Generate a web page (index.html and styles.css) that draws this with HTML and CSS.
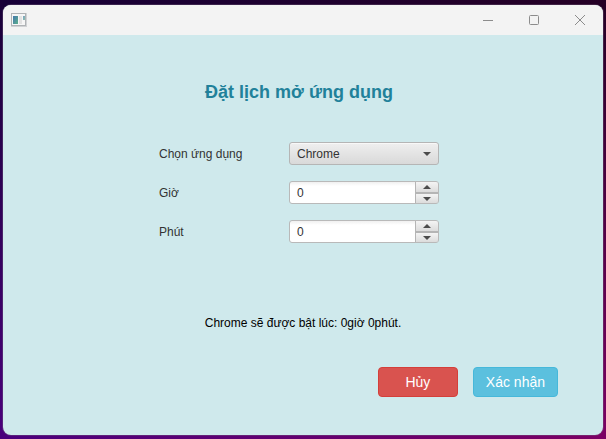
FILE: index.html
```html
<!DOCTYPE html>
<html lang="vi">
<head>
<meta charset="utf-8">
<meta name="viewport" content="width=device-width, initial-scale=1">
<title>Đặt lịch mở ứng dụng</title>
<link rel="stylesheet" href="styles.css">
</head>
<body>
<div class="window">
  <header class="titlebar">
    <svg class="app-icon" width="16" height="14" viewBox="0 0 16 14" aria-hidden="true">
      <defs>
        <linearGradient id="pane" x1="0" y1="0" x2="1" y2="1">
          <stop offset="0" stop-color="#4478ac"/>
          <stop offset="1" stop-color="#5cae8c"/>
        </linearGradient>
      </defs>
      <rect x="0.5" y="0.5" width="14" height="12" fill="#f6f6f6" stroke="#b0b3b6"/>
      <path d="M0 13.5H16M15.5 0V13" stroke="#d0d2d4"/>
      <rect x="2" y="3" width="5" height="8" fill="url(#pane)"/>
      <rect x="8" y="3" width="3" height="8" fill="#e2e2e2"/>
      <rect x="12" y="3" width="2" height="4" fill="url(#pane)" opacity="0.7"/>
    </svg>
    <div class="window-controls">
      <button class="window-button" type="button" aria-label="Minimize">
        <svg width="12" height="12" viewBox="0 0 12 12"><path d="M1 6.5H11"/></svg>
      </button>
      <button class="window-button" type="button" aria-label="Maximize">
        <svg width="12" height="12" viewBox="0 0 12 12"><rect x="1.5" y="1.5" width="9" height="9" rx="1"/></svg>
      </button>
      <button class="window-button" type="button" aria-label="Close">
        <svg width="12" height="12" viewBox="0 0 12 12"><path d="M1 1L11 11M11 1L1 11"/></svg>
      </button>
    </div>
  </header>
  <main>
    <form class="schedule">
      <div class="setup">
        <h1>Đặt lịch mở ứng dụng</h1>
        <div class="fields">
          <label for="app">Chọn ứng dụng</label>
          <div class="select-box">
            <select id="app"><option>Chrome</option></select>
            <svg class="arrow" width="8" height="4" viewBox="0 0 8 4" aria-hidden="true"><path d="M0 0H8L4 4Z"/></svg>
          </div>
          <label for="hour">Giờ</label>
          <div class="spinner">
            <input id="hour" type="text" inputmode="numeric" value="0">
            <div class="steps">
              <button type="button" aria-label="Tăng giờ"><svg width="8" height="4" viewBox="0 0 8 4"><path d="M0 4H8L4 0Z"/></svg></button>
              <button type="button" aria-label="Giảm giờ"><svg width="8" height="4" viewBox="0 0 8 4"><path d="M0 0H8L4 4Z"/></svg></button>
            </div>
          </div>
          <label for="minute">Phút</label>
          <div class="spinner">
            <input id="minute" type="text" inputmode="numeric" value="0">
            <div class="steps">
              <button type="button" aria-label="Tăng phút"><svg width="8" height="4" viewBox="0 0 8 4"><path d="M0 4H8L4 0Z"/></svg></button>
              <button type="button" aria-label="Giảm phút"><svg width="8" height="4" viewBox="0 0 8 4"><path d="M0 0H8L4 4Z"/></svg></button>
            </div>
          </div>
        </div>
      </div>
      <p class="summary">Chrome sẽ được bật lúc: 0giờ 0phút.</p>
      <div class="actions">
        <button class="action danger" type="button">Hủy</button>
        <button class="action info" type="submit">Xác nhận</button>
      </div>
    </form>
  </main>
</div>
</body>
</html>
```

FILE: styles.css
```css
* {
  box-sizing: border-box;
}

body {
  margin: 0;
  min-height: 100vh;
  display: flex;
  padding: 5px 3px 4px;
  background:
    linear-gradient(to bottom, #190038, #4a007c) left / 3px 100% no-repeat,
    linear-gradient(to bottom, #250025, #7c0064) right / 3px 100% no-repeat,
    linear-gradient(to right, #4a007c, #7c0064) bottom / 100% 12px no-repeat,
    linear-gradient(to right, #170038, #250025);
  font: 12px/16px "Liberation Sans", Arial, sans-serif;
  color: #333;
}

button,
input,
select {
  font: inherit;
  color: inherit;
  margin: 0;
}

.window {
  flex: 1;
  display: flex;
  flex-direction: column;
  border-radius: 8px;
  overflow: hidden;
  background: #cfe9ec;
  box-shadow: 0 0 0 1px #77668055;
}

.titlebar {
  display: flex;
  align-items: center;
  justify-content: space-between;
  height: 30px;
  padding-left: 8px;
  background: #f3f3f3;
}

.app-icon {
  display: block;
}

.window-controls {
  display: flex;
  height: 100%;
}

.window-button {
  display: grid;
  place-items: center;
  width: 46px;
  padding: 0;
  border: 0;
  background: none;
}

.window-button svg {
  fill: none;
  stroke: #8c8c8c;
}

main {
  flex: 1;
  padding: 45px 45px 38px;
}

.schedule {
  height: 100%;
  display: flex;
  flex-direction: column;
}

.setup {
  display: flex;
  flex-direction: column;
  align-items: center;
  padding-right: 8px;
}

h1 {
  margin: 0 0 37px;
  font-size: 18px;
  line-height: 25px;
  color: #21819a;
}

.fields {
  display: grid;
  grid-template-columns: 120px 150px;
  gap: 16px 10px;
  align-items: center;
}

.select-box {
  display: grid;
  align-items: center;
}

.select-box > * {
  grid-area: 1 / 1;
}

.select-box select {
  appearance: none;
  width: 100%;
  height: 23px;
  padding: 0 24px 0 7px;
  border: 1px solid #b5b5b5;
  border-radius: 3px;
  background: linear-gradient(#efefef, #d9d9d9);
  box-shadow: inset 0 1px #f8f8f8;
}

.arrow {
  justify-self: end;
  margin-right: 8px;
  pointer-events: none;
}

.arrow,
.steps svg {
  fill: #4c4c4c;
}

.spinner {
  display: flex;
  height: 23px;
  border: 1px solid #b9b9b9;
  border-radius: 3px;
  overflow: hidden;
  background: linear-gradient(#f0f0f0, #fff 4px);
}

.spinner input {
  flex: 1;
  min-width: 0;
  padding: 0 7px;
  border: 0;
  background: none;
}

.steps {
  display: grid;
  grid-template-rows: 10px 9px;
  gap: 2px;
  width: 23px;
  padding-left: 1px;
  background: #b5b5b5;
}

.steps button {
  display: grid;
  place-items: center;
  padding: 0;
  border: 0;
  background: linear-gradient(#f4f4f4, #dcdcdc);
}

.summary {
  margin: 72px 0 36px;
  text-align: center;
  color: #000;
}

.actions {
  display: flex;
  justify-content: flex-end;
  gap: 15px;
}

.action {
  min-width: 80px;
  height: 30px;
  padding: 0 12px;
  border: 1px solid;
  border-radius: 4px;
  font-size: 14px;
  color: #fff;
}

.danger {
  background: #d9534f;
  border-color: #d43f3a;
}

.info {
  background: #5bc0de;
  border-color: #46b8da;
}
```
